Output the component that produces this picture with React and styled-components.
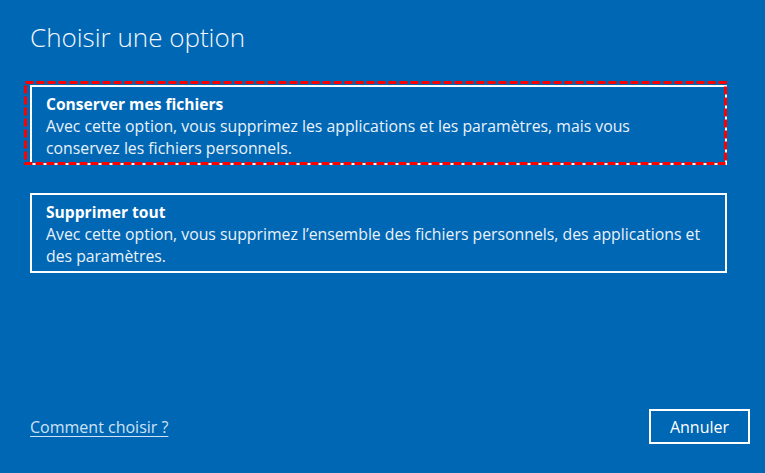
import React from "react";
import styled, { createGlobalStyle } from "styled-components";

const GlobalStyle = createGlobalStyle`
  html, body {
    margin: 0;
    padding: 0;
    background: #0067b4;
  }
  body {
    font-family: "Open Sans", "Noto Sans", Arial, sans-serif;
    color: #ffffff;
  }
`;

const Screen = styled.div`
  box-sizing: border-box;
  width: 765px;
  height: 473px;
  background: #0067b4;
  padding: 19px 38px 29px 30px;
  display: flex;
  flex-direction: column;
`;

const Heading = styled.h1`
  margin: 0;
  font-weight: 300;
  font-size: 26px;
  line-height: 36px;
  color: #f4f8fc;
`;

const OptionList = styled.div`
  margin-top: 30px;
  display: flex;
  flex-direction: column;
  gap: 28px;
`;

const OptionCard = styled.div`
  position: relative;
  box-sizing: border-box;
  height: 80px;
  border: 2px solid #ffffff;
  padding: 6px 20px 4px 14px;
  cursor: pointer;
`;

const OptionTitle = styled.div`
  font-weight: 700;
  font-size: 15.6px;
  line-height: 22px;
`;

const OptionText = styled.div`
  font-size: 15.8px;
  line-height: 22px;
  color: #eaf2fa;
`;

const Highlight = styled.svg`
  position: absolute;
  left: -8px;
  top: -6px;
  width: calc(100% + 10px);
  height: calc(100% + 8px);
  overflow: visible;
  pointer-events: none;
`;

const Footer = styled.div`
  margin-top: auto;
  display: flex;
  align-items: center;
  justify-content: space-between;
`;

const HelpLink = styled.a`
  font-size: 16px;
  color: #cfe2f5;
  text-decoration: underline;
  text-underline-offset: 3px;
`;

const CancelButton = styled.button`
  box-sizing: border-box;
  width: 101px;
  height: 35px;
  margin-right: -23px;
  background: transparent;
  border: 2px solid #ffffff;
  color: #ffffff;
  font-family: inherit;
  font-size: 16px;
  cursor: pointer;
`;

const options = [
  {
    title: "Conserver mes fichiers",
    text: "Avec cette option, vous supprimez les applications et les paramètres, mais vous conservez les fichiers personnels.",
    selected: true,
  },
  {
    title: "Supprimer tout",
    text: "Avec cette option, vous supprimez l’ensemble des fichiers personnels, des applications et des paramètres.",
  },
];

const App = () => {
  return (
    <>
      <GlobalStyle />
      <Screen>
        <Heading>Choisir une option</Heading>
        <OptionList>
          {options.map((o) => (
            <OptionCard key={o.title}>
              <OptionTitle>{o.title}</OptionTitle>
              <OptionText>{o.text}</OptionText>
              {o.selected && (
                <Highlight>
                  <rect
                    x="1.5"
                    y="1.5"
                    width="calc(100% - 3px)"
                    height="calc(100% - 3px)"
                    fill="none"
                    stroke="#ff0000"
                    strokeWidth="3"
                    strokeDasharray="8 3"
                  />
                </Highlight>
              )}
            </OptionCard>
          ))}
        </OptionList>
        <Footer>
          <HelpLink href="#">Comment choisir ?</HelpLink>
          <CancelButton>Annuler</CancelButton>
        </Footer>
      </Screen>
    </>
  );
};

export default App;
